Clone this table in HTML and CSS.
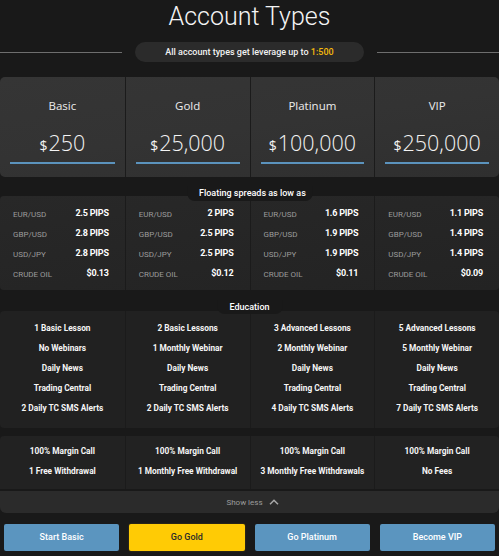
FILE: index.html
```html
<!DOCTYPE html>
<html>
<head>
<meta charset="utf-8">
<link rel="stylesheet" href="styles.css">
</head>
<body>
<h1 class="title">Account Types</h1>
<div class="leverage">
  <span class="rule"></span>
  <div class="pill">All account types get leverage up to <span class="gold">1:500</span></div>
  <span class="rule"></span>
</div>

<div class="card head-card">
  <div class="hcol"><div class="name">Basic</div><div class="price"><span class="cur">$</span>250</div><div class="uline"></div></div>
  <div class="hcol"><div class="name">Gold</div><div class="price"><span class="cur">$</span>25,000</div><div class="uline"></div></div>
  <div class="hcol"><div class="name">Platinum</div><div class="price"><span class="cur">$</span>100,000</div><div class="uline"></div></div>
  <div class="hcol"><div class="name">VIP</div><div class="price"><span class="cur">$</span>250,000</div><div class="uline"></div></div>
</div>

<div class="section spreads-section">
  <div class="tab tab-spreads">Floating spreads as low as</div>
  <div class="card spread-card">
    <div class="scol">
      <div class="srow"><span class="lab">EUR/USD</span><span class="val">2.5 PIPS</span></div>
      <div class="srow"><span class="lab">GBP/USD</span><span class="val">2.8 PIPS</span></div>
      <div class="srow"><span class="lab">USD/JPY</span><span class="val">2.8 PIPS</span></div>
      <div class="srow"><span class="lab">CRUDE OIL</span><span class="val">$0.13</span></div>
    </div>
    <div class="scol">
      <div class="srow"><span class="lab">EUR/USD</span><span class="val">2 PIPS</span></div>
      <div class="srow"><span class="lab">GBP/USD</span><span class="val">2.5 PIPS</span></div>
      <div class="srow"><span class="lab">USD/JPY</span><span class="val">2.5 PIPS</span></div>
      <div class="srow"><span class="lab">CRUDE OIL</span><span class="val">$0.12</span></div>
    </div>
    <div class="scol">
      <div class="srow"><span class="lab">EUR/USD</span><span class="val">1.6 PIPS</span></div>
      <div class="srow"><span class="lab">GBP/USD</span><span class="val">1.9 PIPS</span></div>
      <div class="srow"><span class="lab">USD/JPY</span><span class="val">1.9 PIPS</span></div>
      <div class="srow"><span class="lab">CRUDE OIL</span><span class="val">$0.11</span></div>
    </div>
    <div class="scol">
      <div class="srow"><span class="lab">EUR/USD</span><span class="val">1.1 PIPS</span></div>
      <div class="srow"><span class="lab">GBP/USD</span><span class="val">1.4 PIPS</span></div>
      <div class="srow"><span class="lab">USD/JPY</span><span class="val">1.4 PIPS</span></div>
      <div class="srow"><span class="lab">CRUDE OIL</span><span class="val">$0.09</span></div>
    </div>
  </div>
</div>

<div class="section edu-section">
  <div class="tab tab-edu">Education</div>
  <div class="card edu-card">
    <div class="ecol"><div>1 Basic Lesson</div><div>No Webinars</div><div>Daily News</div><div>Trading Central</div><div>2 Daily TC SMS Alerts</div></div>
    <div class="ecol"><div>2 Basic Lessons</div><div>1 Monthly Webinar</div><div>Daily News</div><div>Trading Central</div><div>2 Daily TC SMS Alerts</div></div>
    <div class="ecol"><div>3 Advanced Lessons</div><div>2 Monthly Webinar</div><div>Daily News</div><div>Trading Central</div><div>4 Daily TC SMS Alerts</div></div>
    <div class="ecol"><div>5 Advanced Lessons</div><div>5 Monthly Webinar</div><div>Daily News</div><div>Trading Central</div><div>7 Daily TC SMS Alerts</div></div>
  </div>
</div>

<div class="card margin-card">
  <div class="ecol mcol"><div>100% Margin Call</div><div>1 Free Withdrawal</div></div>
  <div class="ecol mcol"><div>100% Margin Call</div><div>1 Monthly Free Withdrawal</div></div>
  <div class="ecol mcol"><div>100% Margin Call</div><div>3 Monthly Free Withdrawals</div></div>
  <div class="ecol mcol"><div>100% Margin Call</div><div>No Fees</div></div>
</div>
<div class="showless">Show less
  <svg class="chev" width="10" height="6" viewBox="0 0 10 6"><polyline points="1,5.2 5,1.2 9,5.2" fill="none" stroke="#a8a8a8" stroke-width="1.5"/></svg>
</div>

<div class="buttons">
  <div class="btn blue">Start Basic</div>
  <div class="btn yellow">Go Gold</div>
  <div class="btn blue">Go Platinum</div>
  <div class="btn blue">Become VIP</div>
</div>
</body>
</html>
```
FILE: styles.css
```css
* { box-sizing: border-box; }
html, body { margin: 0; padding: 0; }
body {
  width: 499px;
  height: 556px;
  overflow: hidden;
  background: #191919;
  color: #fff;
  font-family: Roboto, "Liberation Sans", sans-serif;
}
.title {
  margin: 0;
  padding-top: 2px;
  font-weight: 300;
  font-size: 25px;
  line-height: 30px;
  text-align: center;
  color: #f4f4f4;
}
.leverage {
  display: flex;
  align-items: center;
  gap: 13px;
  margin-top: 10px;
}
.rule {
  flex: 1;
  height: 1px;
  background: #6e6e6e;
}
.pill {
  width: 229px;
  height: 20px;
  line-height: 20px;
  border-radius: 10px;
  background: #2b2b2b;
  text-align: center;
  font-size: 9px;
  font-weight: 500;
  color: #f2f2f2;
}
.gold { color: #f3b90c; }

.card {
  display: grid;
  grid-template-columns: repeat(4, 1fr);
}
.head-card {
  margin-top: 15px;
  height: 100px;
  border-radius: 5px;
  background: linear-gradient(172deg, #353535 0%, #333 50%, #2f2f2f 100%);
}
.hcol {
  display: flex;
  flex-direction: column;
  align-items: center;
  padding-top: 21px;
}
.hcol + .hcol, .scol + .scol, .ecol + .ecol { border-left: 1px solid #1b1b1b; }
.name {
  font-family: "Open Sans", sans-serif;
  font-size: 11.5px;
  line-height: 16px;
  color: #ececec;
}
.price {
  margin-top: 15px;
  font-family: "Open Sans", sans-serif;
  font-weight: 300;
  font-size: 21.5px;
  line-height: 28px;
  color: #f4f4f4;
}
.cur { font-size: 14px; font-weight: 400; margin-right: 1px; }
.uline {
  align-self: stretch;
  margin: 2px 10px 0;
  height: 2px;
  background: #5b93bd;
}

.section { position: relative; }
.tab {
  position: absolute;
  left: 50%;
  transform: translateX(-50%);
  background: #191919;
  border-radius: 0 0 7px 7px;
  font-size: 9px;
  font-weight: 500;
  color: #fff;
  text-align: center;
  z-index: 1;
  white-space: nowrap;
}
.tab-spreads { top: -10px; height: 15px; line-height: 15px; padding: 0 12px; width: 125px; }
.tab-edu { top: -11px; height: 14px; line-height: 14px; width: 65px; }

.spreads-section { margin-top: 19px; }
.spread-card {
  height: 94px;
  border-radius: 4px;
  background: linear-gradient(172deg, #282828 0%, #252525 60%, #232323 100%);
}
.scol { padding: 8px 16px 0 13px; }
.srow {
  display: flex;
  justify-content: space-between;
  align-items: baseline;
  height: 20px;
  line-height: 20px;
}
.lab { font-size: 8px; color: #9b9b9b; }
.val { font-size: 9px; font-weight: 700; color: #fff; letter-spacing: -0.2px; position: relative; top: -1px; }

.edu-section { margin-top: 21px; }
.edu-card {
  height: 117px;
  border-radius: 4px;
  background: #212121;
}
.ecol {
  padding-top: 7px;
  text-align: center;
  font-size: 8.3px;
  font-weight: 700;
  color: #f6f6f6;
}
.ecol div { height: 20px; line-height: 20px; }

.margin-card {
  margin-top: 8px;
  height: 53px;
  border-radius: 4px 4px 0 0;
  background: #222;
}
.mcol { padding-top: 5px; }

.showless {
  margin-top: 2px;
  height: 22px;
  border-radius: 0 0 6px 6px;
  background: #2b2b2b;
  display: flex;
  align-items: center;
  justify-content: center;
  gap: 6px;
  font-size: 8px;
  color: #9c9c9c;
  padding-left: 6px;
}
.chev { margin-top: -1px; }

.buttons {
  display: grid;
  grid-template-columns: repeat(4, 1fr);
  gap: 10px;
  padding: 0 4px;
  margin-top: 11px;
}
.btn {
  height: 27px;
  line-height: 27px;
  border-radius: 2px;
  text-align: center;
  font-size: 9px;
  font-weight: 500;
}
.blue { background: #5b95bf; color: #fff; }
.yellow { background: #ffcb05; color: #2a2a2a; box-shadow: 0 0 2px rgba(255, 203, 5, 0.25); }
```
